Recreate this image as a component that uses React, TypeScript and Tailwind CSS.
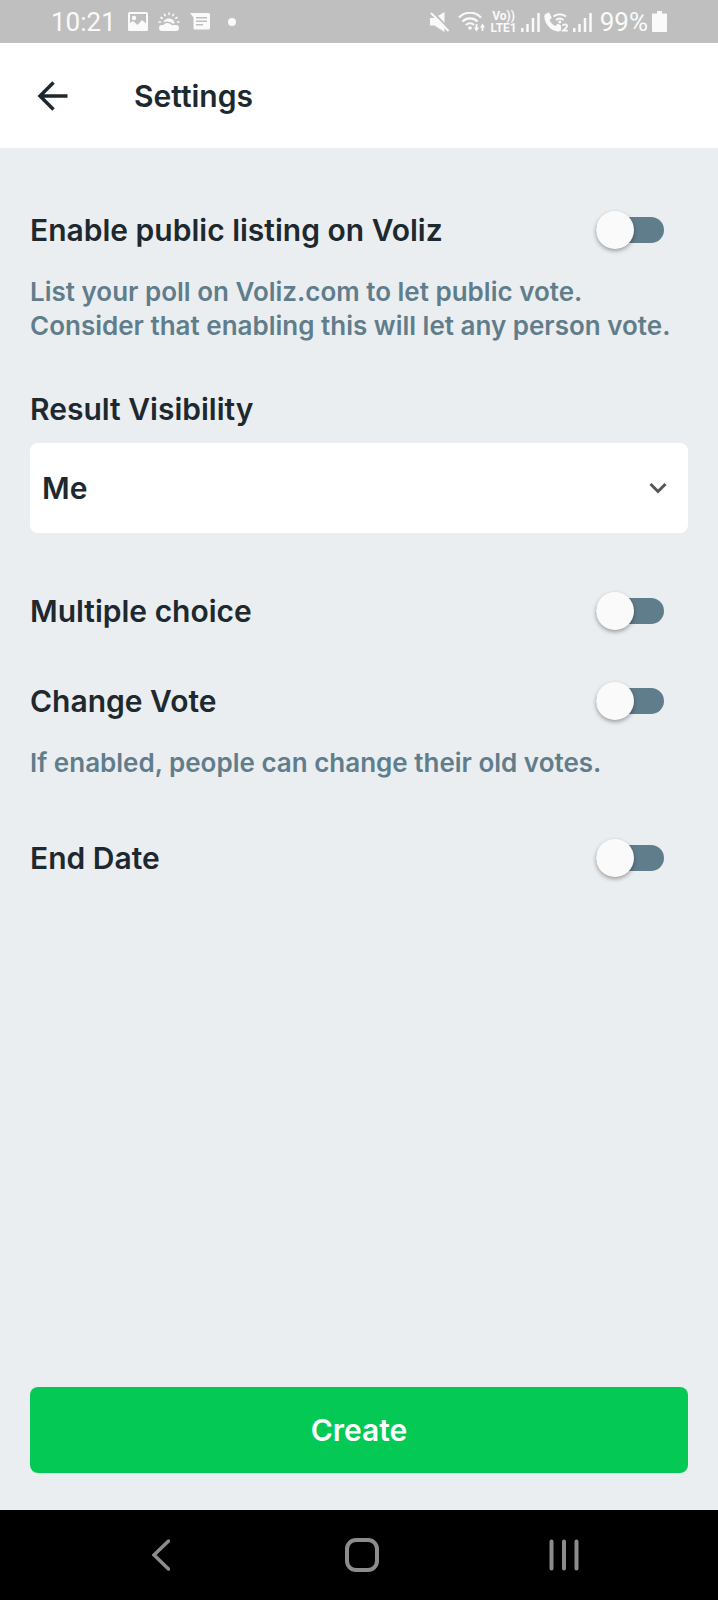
import { useId } from "react";
import type { ReactNode } from "react";

const ImageIcon = () => (
  <svg viewBox="0 0 20 20" className="h-5 w-5" fill="currentColor" aria-hidden="true">
    <path
      fillRule="evenodd"
      d="M1.5 0h17A1.5 1.5 0 0 1 20 1.5v16a1.5 1.5 0 0 1-1.5 1.5h-17A1.5 1.5 0 0 1 0 17.5v-16A1.5 1.5 0 0 1 1.5 0ZM2 2v9l3-2 4.500 4 4.500-5 4 3.500V2ZM6 3.800a2.200 2.200 0 1 1 0 4.400 2.200 2.200 0 0 1 0-4.400Z"
    />
  </svg>
);

const WeatherIcon = () => (
  <svg viewBox="0 0 22 20" className="h-5 w-[22px]" fill="currentColor" aria-hidden="true">
    <path d="M4 19a3 3 0 0 1 0-6h1.500a5 5 0 0 1 3.500-2 7 7 0 0 1 5 2.300l1.500-.3H18a3 3 0 0 1 0 6Z" />
    <path d="M5.300 10.200a6 6 0 0 1 11.400 1L15 11.800a10 10 0 0 0-9.700-1.600Z" />
    <path
      d="M11 1v1.500M6.500 2.300l.7 1.300M15.500 2.300l-.7 1.300M2.900 5.500l1.300.8M19.100 5.500l-1.300.8M1 10h1.500M19.500 10H21"
      stroke="currentColor"
      strokeWidth="1.600"
      strokeLinecap="round"
    />
  </svg>
);

const MessageIcon = () => (
  <svg viewBox="0 0 20 18" className="h-[18px] w-5" fill="currentColor" aria-hidden="true">
    <path
      fillRule="evenodd"
      d="M0 0h18.500A1.500 1.500 0 0 1 20 1.500v13.500a1.500 1.500 0 0 1-1.500 1.500H5A1.500 1.500 0 0 1 3.500 15V4.500ZM6 4v1.500h11V4ZM6 7.500V9h11V7.500ZM6 11v1.500h7V11Z"
    />
  </svg>
);

const MuteIcon = () => (
  <svg viewBox="0 0 20 20" className="h-5 w-5" aria-hidden="true">
    <path d="M0 6h4.500L14.500 0v20l-10-6.500H0Z" fill="currentColor" />
    <path d="M2.500-.5 20 18" stroke="#bfbfbf" strokeWidth="2" />
    <path d="M1 1l17.500 18" stroke="currentColor" strokeWidth="2" />
  </svg>
);

const WifiIcon = () => (
  <svg viewBox="0 0 28 20" className="h-5 w-7" fill="none" stroke="currentColor" aria-hidden="true">
    <path d="M1 5.500a15 15 0 0 1 22 0M4.500 9.500a10.500 10.500 0 0 1 15 0M8 13a6 6 0 0 1 8 0" strokeWidth="2.200" />
    <circle cx="12" cy="16" r="1.800" fill="currentColor" stroke="none" />
    <path d="M18.500 12v6M24.500 19v-6" strokeWidth="1.800" />
    <path d="M16 15.500h5L18.500 19.500ZM22 15.500h5L24.500 11.500Z" fill="currentColor" stroke="none" />
  </svg>
);

const SignalIcon = () => (
  <svg viewBox="0 0 19 20" className="h-5 w-[19px]" stroke="currentColor" strokeWidth="2.500" aria-hidden="true">
    <path d="M1.300 20v-4M6.500 20v-8M12 20V6M17.500 20V1" />
  </svg>
);

const WifiCallIcon = () => (
  <svg viewBox="0 0 25 20" className="h-5 w-[25px]" aria-hidden="true">
    <path
      d="M1.500 2 4 .7c.6-.3 1.200 0 1.500.5L7.500 5c.2.6.1 1-.3 1.400L5.500 8c1.300 3 3.200 4.800 6 6l1.600-1.800c.4-.4.9-.5 1.400-.2L17 13.500v5c-1 .8-2 1.200-3.500 1C6.500 18.500.5 11.500.3 4.500.3 3.300.8 2.500 1.500 2Z"
      fill="currentColor"
    />
    <path d="M9.500 4.500a9.500 9.500 0 0 1 12.500 0M12 8a6 6 0 0 1 7.500 0" fill="none" stroke="currentColor" strokeWidth="2" />
    <circle cx="15.800" cy="10" r="1.400" fill="currentColor" />
    <path d="M18.800 14c.3-2.300 4.300-2.300 4.300.1 0 1.600-2.500 2.800-4 4.600h4.700" fill="none" stroke="currentColor" strokeWidth="1.800" />
  </svg>
);

const BatteryIcon = () => (
  <svg viewBox="0 0 15 21" className="h-[21px] w-[15px]" fill="currentColor" aria-hidden="true">
    <path d="M5 0h5v2.500h4a1 1 0 0 1 1 1V20a1 1 0 0 1-1 1H1a1 1 0 0 1-1-1V3.500a1 1 0 0 1 1-1h4Z" />
  </svg>
);

const StatusBar = () => (
  <div className="flex h-[43px] items-center bg-[#bfbfbf] pr-[51px] pl-[51px] font-[Roboto,sans-serif] font-normal text-[#fafafa]">
    <span className="text-[26px] leading-8">10:21</span>
    <div className="ml-3 flex items-center gap-2.5">
      <ImageIcon />
      <WeatherIcon />
      <MessageIcon />
    </div>
    <span className="ml-[18px] h-2 w-2 rounded-full bg-current" />
    <div className="ml-auto flex items-center gap-1">
      <MuteIcon />
      <span className="ml-1">
        <WifiIcon />
      </span>
      <span className="text-center text-xs leading-3 font-bold">
        Vo))
        <br />
        LTE1
      </span>
      <SignalIcon />
      <WifiCallIcon />
      <SignalIcon />
      <span className="ml-1 text-[26px] leading-8">99%</span>
      <BatteryIcon />
    </div>
  </div>
);

const Toggle = ({ id, describedBy }: { id: string; describedBy?: string }) => (
  <input
    id={id}
    type="checkbox"
    role="switch"
    aria-describedby={describedBy}
    className="relative h-[38px] w-[68px] shrink-0 cursor-pointer appearance-none before:absolute before:inset-x-0 before:inset-y-1.5 before:rounded-full before:bg-[#607d8b] after:absolute after:top-0 after:left-0 after:h-[38px] after:w-[38px] after:rounded-full after:bg-[#fafafa] after:shadow-[0_2px_4px_rgba(0,0,0,0.35)] checked:before:bg-[#04c954] checked:after:left-[30px]"
  />
);

const SettingRow = ({ label, children }: { label: string; children?: ReactNode }) => {
  const id = useId();
  const hintId = `${id}-hint`;

  return (
    <div>
      <div className="flex items-center justify-between pr-6">
        <label htmlFor={id} className="text-3xl leading-9">
          {label}
        </label>
        <Toggle id={id} describedBy={children ? hintId : undefined} />
      </div>
      {children && (
        <p id={hintId} className="mt-[26px] text-[26px] leading-[34px] text-[#607d8b]">
          {children}
        </p>
      )}
    </div>
  );
};

const SystemNav = () => (
  <nav className="grid h-[90px] grid-cols-3 bg-black pr-[53px] pl-[60px] text-[#8c8c8c]">
    <button type="button" aria-label="Back" className="flex items-center justify-center">
      <svg viewBox="0 0 18 32" className="h-8 w-[18px]" fill="none" stroke="currentColor" strokeWidth="3.500">
        <path d="M16.500 2 2 16l14.500 14" strokeLinecap="round" />
      </svg>
    </button>
    <button type="button" aria-label="Home" className="flex items-center justify-center">
      <svg viewBox="0 0 34 34" className="h-[34px] w-[34px]" fill="none" stroke="currentColor" strokeWidth="4">
        <rect x="2" y="2" width="30" height="30" rx="9" />
      </svg>
    </button>
    <button type="button" aria-label="Recent apps" className="flex items-center justify-center">
      <svg viewBox="0 0 30 32" className="h-8 w-[30px]" stroke="currentColor" strokeWidth="4" strokeLinecap="round">
        <path d="M2.500 2.500v27M15 2.500v27M27.500 2.500v27" />
      </svg>
    </button>
  </nav>
);

export default function App() {
  return (
    <div className="flex min-h-screen flex-col bg-[#ebeef1] font-[Inter,sans-serif] font-semibold text-[#1e292f]">
      <StatusBar />

      <header className="flex h-[105px] items-center bg-white pl-[37px]">
        <button type="button" aria-label="Go back">
          <svg viewBox="0 0 31 30" className="h-[30px] w-[31px]" fill="none" stroke="currentColor" strokeWidth="3.500">
            <path d="M16.500 1.500 3 15l13.500 13.500M3 15h27.500" />
          </svg>
        </button>
        <h1 className="ml-[66px] text-3xl leading-9">Settings</h1>
      </header>

      <form className="flex flex-1 flex-col px-[30px] pt-[63px] pb-[37px]" onSubmit={(e) => e.preventDefault()}>
        <SettingRow label="Enable public listing on Voliz">
          List your poll on Voliz.com to let public vote.
          <br />
          Consider that enabling this will let any person vote.
        </SettingRow>

        <div className="mt-12">
          <label htmlFor="visibility" className="block text-3xl leading-9">
            Result Visibility
          </label>
          <div className="relative mt-4">
            <select
              id="visibility"
              className="h-[90px] w-full appearance-none rounded-lg bg-white px-3 text-3xl leading-9"
            >
              <option>Me</option>
            </select>
            <svg
              viewBox="0 0 18 12"
              className="pointer-events-none absolute inset-y-0 right-[21px] my-auto h-3 w-[18px] text-[#555555]"
              fill="none"
              stroke="currentColor"
              strokeWidth="3"
              aria-hidden="true"
            >
              <path d="m1.500 2 7.500 7.500L16.500 2" />
            </svg>
          </div>
        </div>

        <div className="mt-[59px] space-y-[52px]">
          <SettingRow label="Multiple choice" />
          <SettingRow label="Change Vote">If enabled, people can change their old votes.</SettingRow>
        </div>

        <div className="mt-[59px]">
          <SettingRow label="End Date" />
        </div>

        <button type="submit" className="mt-auto h-[86px] rounded-lg bg-[#04c954] text-3xl leading-9 text-white">
          Create
        </button>
      </form>

      <SystemNav />
    </div>
  );
}
